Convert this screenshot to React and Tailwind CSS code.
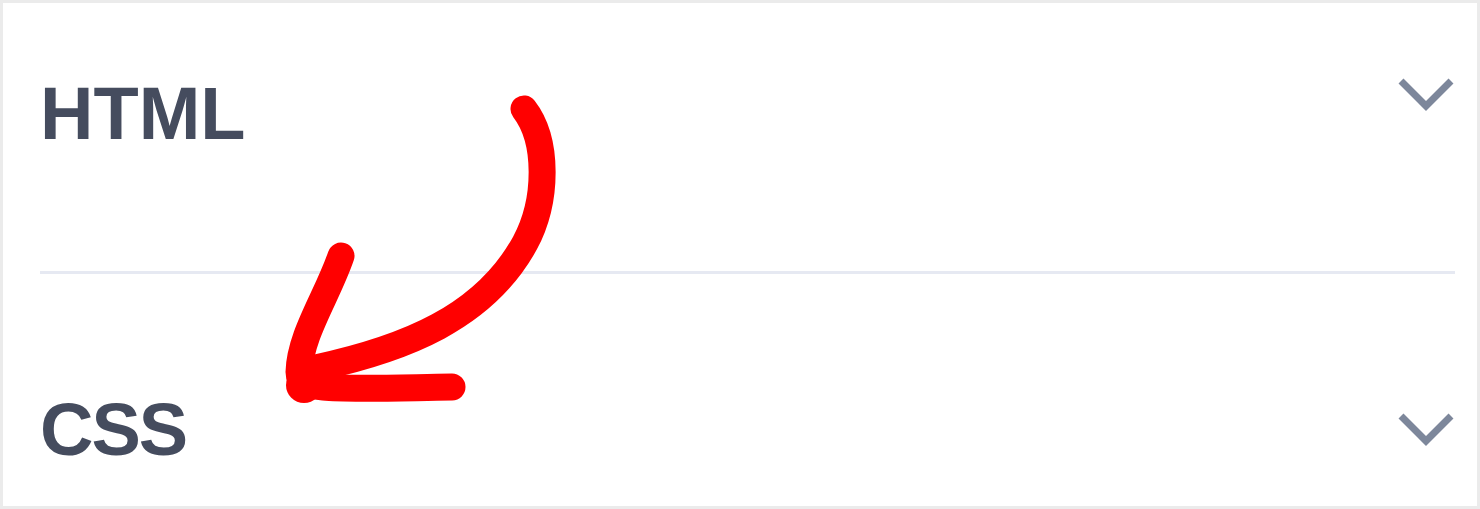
import React from "react";

function Chevron() {
  return (
    <svg width="58" height="36" viewBox="0 0 58 36" fill="none" className="shrink-0">
      <polyline points="4,4 29,29 54,4" stroke="#7d879b" strokeWidth="7" strokeLinejoin="miter" />
    </svg>
  );
}

function Row({ label, className }) {
  return (
    <div className={`flex items-center justify-between ${className}`}>
      <span className="text-[74px] leading-none font-bold text-[#454c5e] font-['Liberation_Sans',Arial,sans-serif]">
        {label}
      </span>
      <Chevron />
    </div>
  );
}

export default function App() {
  return (
    <div className="relative w-[1480px] h-[509px] bg-white border-[3px] border-[#ebebeb] pl-[37px] pr-[22px] overflow-hidden">
      <Row label="HTML" className="pt-[74px] h-[268px] items-start" />
      <div className="h-[3px] bg-[#e6e9f2]" />
      <Row label="CSS" className="mt-[119px] tracking-[-2px]" />

      {/* red hand-drawn arrow */}
      <svg
        className="absolute left-0 top-0 pointer-events-none"
        width="1480"
        height="509"
        viewBox="3 3 1480 509"
        fill="none"
      >
        <path
          d="M 524 109 C 548 140, 548 200, 525 243 C 484 318, 404 349, 316 368"
          stroke="#ff0000"
          strokeWidth="27"
          strokeLinecap="round"
        />
        <path
          d="M 341 256 C 327 297, 300 335, 299 372 C 299 392, 332 389, 452 387"
          stroke="#ff0000"
          strokeWidth="27"
          strokeLinecap="round"
          strokeLinejoin="round"
        />
        <circle cx="304" cy="385" r="18" fill="#ff0000" />
      </svg>
    </div>
  );
}
